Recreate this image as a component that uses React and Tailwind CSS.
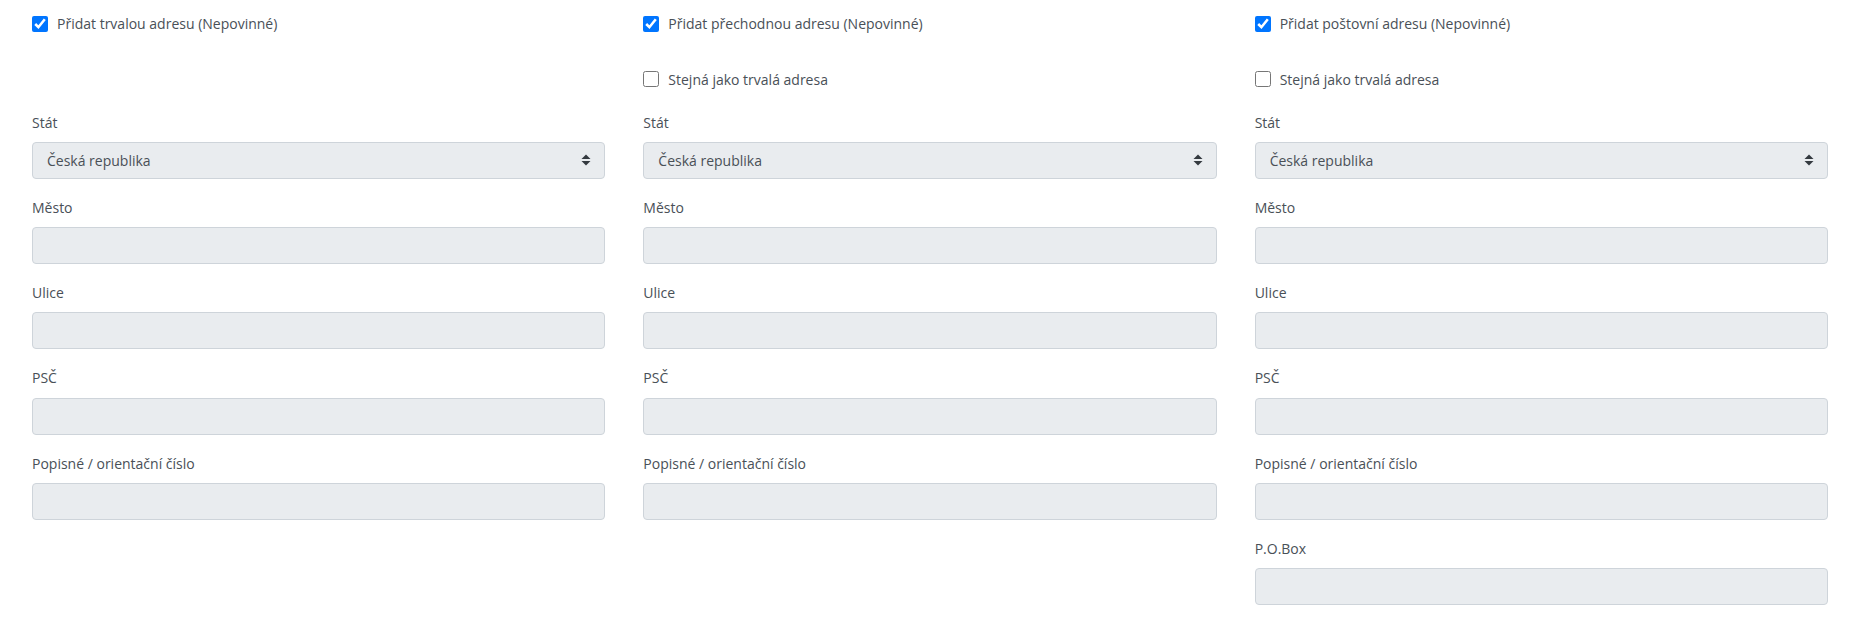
import React from 'react';

const SortArrows = () => (
  <svg width="10" height="12" viewBox="0 0 10 12" className="shrink-0">
    <path d="M0.5 5 L5 0.5 L9.5 5 Z" fill="#343a40" />
    <path d="M0.5 7 L5 11.5 L9.5 7 Z" fill="#343a40" />
  </svg>
);

const CheckRow = ({ label, checked, hidden }) => (
  <label className={"flex items-center gap-[9px] h-[21px] text-[14px] leading-[21px] text-[#495057] " + (hidden ? "invisible" : "")}>
    <input type="checkbox" defaultChecked={checked} className="w-[16px] h-[16px] m-0 shrink-0" />
    <span>{label}</span>
  </label>
);

const Field = ({ label, children }) => (
  <div className="mb-[18px]">
    <div className="text-[14px] leading-[21px] text-[#495057] mb-[9.25px]">{label}</div>
    {children || <div className="h-[37px] rounded-[4px] border border-[#ced4da] bg-[#e9ecef]" />}
  </div>
);

const Country = () => (
  <div className="h-[37px] rounded-[4px] border border-[#ced4da] bg-[#e9ecef] flex items-center justify-between pl-[14px] pr-[13px] text-[14px] text-[#495057]">
    <span>Česká republika</span>
    <SortArrows />
  </div>
);

const AddressColumn = ({ title, sameAs, poBox }) => (
  <div>
    <CheckRow label={title} checked />
    <div className="mt-[34.5px]">
      <CheckRow label="Stejná jako trvalá adresa" hidden={!sameAs} />
    </div>
    <div className="mt-[22px]">
      <Field label="Stát"><Country /></Field>
      <Field label="Město" />
      <Field label="Ulice" />
      <Field label="PSČ" />
      <Field label="Popisné / orientační číslo" />
      {poBox && <Field label="P.O.Box" />}
    </div>
  </div>
);

export default function App() {
  return (
    <div className="min-h-[640px] bg-white pl-[32px] pr-[28px] pt-[13px] font-['Open_Sans',sans-serif]">
      <div className="grid grid-cols-3 gap-x-[38px]">
        <AddressColumn title="Přidat trvalou adresu (Nepovinné)" />
        <AddressColumn title="Přidat přechodnou adresu (Nepovinné)" sameAs />
        <AddressColumn title="Přidat poštovní adresu (Nepovinné)" sameAs poBox />
      </div>
    </div>
  );
}
